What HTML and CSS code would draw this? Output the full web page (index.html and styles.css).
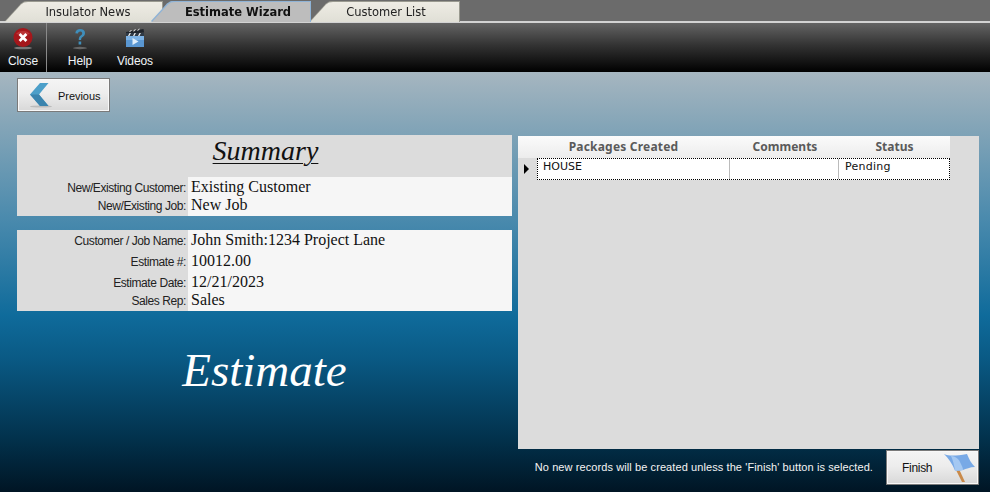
FILE: index.html
```html
<!DOCTYPE html>
<html lang="en">
<head>
<meta charset="utf-8">
<title>Estimate Wizard</title>
<link rel="stylesheet" href="styles.css">
</head>
<body>
<nav class="tabs">
  <div class="tab tab-news"><div class="tab-face">Insulator News</div></div>
  <div class="tab tab-wizard"><div class="tab-face">Estimate Wizard</div></div>
  <div class="tab tab-list"><div class="tab-face">Customer List</div></div>
</nav>
<header class="toolbar">
  <div class="tool tool-close">
    <svg class="tool-icon" width="22" height="22" viewBox="0 0 22 22">
      <ellipse cx="11" cy="20" rx="9" ry="1.3" fill="#777"/>
      <circle cx="11" cy="9.5" r="9.500" fill="#a5171b"/>
      <path d="M4 6a8 6 0 0 1 14 0a12 5 0 0 1-14 0z" fill="#c9484a" opacity=".6"/>
      <path d="M7.6 6.1 11 9.5l3.4-3.4M7.6 12.9 11 9.5l3.4 3.4" fill="none" stroke="#fff" stroke-width="2.8"/>
    </svg>
    <span>Close</span>
  </div>
  <div class="tool-sep"></div>
  <div class="tool tool-help">
    <svg class="tool-icon" width="22" height="22" viewBox="0 0 22 22">
      <ellipse cx="11" cy="20" rx="7" ry="1.2" fill="#666"/>
      <path d="M6.3 5.200C6.600 2.300 8.600 1 11.200 1c2.800 0 4.800 1.500 4.800 4 0 2-1 3-2.400 4-1.100.8-1.500 1.500-1.500 3H9.700c0-2.300.6-3.400 2-4.400 1-.8 1.500-1.400 1.500-2.400 0-1.200-.8-1.800-2-1.800-1.300 0-2 .8-2.200 2.100z" fill="#3f8fbc"/>
      <rect x="9.600" y="13.500" width="2.600" height="3" fill="#3f8fbc"/>
    </svg>
    <span>Help</span>
  </div>
  <div class="tool tool-videos">
    <svg class="tool-icon" width="22" height="22" viewBox="0 0 22 22">
      <rect x="2" y="6" width="18" height="13" fill="#7db3e6"/>
      <rect x="2" y="12" width="18" height="7" fill="#5a97d2"/>
      <path d="M2 4 19.500 1l.6 3.500L2 6z" fill="#20252c"/>
      <path d="M5 4l2-2 1 .1-2 2zM9 3.300l2-2 1 .1-2 2zM13 2.700l2-2 1 .1-2 2z" fill="#eee"/>
      <rect x="2" y="5" width="18" height="3" fill="#2f3a46"/>
      <path d="M4 8l1.500-3h1.400L5.400 8zM9 8l1.500-3h1.400l-1.500 3zM14 8l1.500-3h1.400l-1.500 3z" fill="#eee"/>
      <path d="M8.500 10v7l6-3.500z" fill="#dfeefa"/>
    </svg>
    <span>Videos</span>
  </div>
</header>
<main class="main">
  <button class="btn btn-prev" type="button">
    <svg class="btn-icon" width="24" height="26" viewBox="0 0 24 26">
      <ellipse cx="13" cy="24.500" rx="11" ry="1" fill="#bbb"/>
      <path d="M12 1h8.500L11 12.500 20.500 24H12L2 12.500z" fill="#4c9fc9"/>
      <path d="M2 12.500h9L20.500 24H12z" fill="#3a84ae"/>
    </svg>
    <span>Previous</span>
  </button>
  <div class="content">
    <section class="left">
      <div class="card">
        <h1 class="summary-title"><span>Summary</span></h1>
        <div class="row row-a"><div class="lbl">New/Existing Customer:</div><div class="val">Existing Customer</div></div>
        <div class="row row-b"><div class="lbl">New/Existing Job:</div><div class="val">New Job</div></div>
      </div>
      <div class="card card-2">
        <div class="row row-c"><div class="lbl">Customer / Job Name:</div><div class="val">John Smith:1234 Project Lane</div></div>
        <div class="row row-c"><div class="lbl">Estimate #:</div><div class="val">10012.00</div></div>
        <div class="row row-d"><div class="lbl">Estimate Date:</div><div class="val">12/21/2023</div></div>
        <div class="row row-c"><div class="lbl">Sales Rep:</div><div class="val">Sales</div></div>
      </div>
      <div class="estimate">Estimate</div>
    </section>
    <section class="right">
      <div class="grid">
        <div class="gh gh-corner"></div>
        <div class="gh gh-1">Packages Created</div>
        <div class="gh gh-2">Comments</div>
        <div class="gh gh-3">Status</div>
        <div class="g-sel"><i class="arrow"></i></div>
        <div class="g-row">
          <div class="gc">HOUSE</div>
          <div class="gc gc-mid"></div>
          <div class="gc gc-status">Pending</div>
        </div>
      </div>
    </section>
  </div>
  <footer class="foot">
    <p class="note">No new records will be created unless the 'Finish' button is selected.</p>
    <button class="btn btn-finish" type="button">
      <span>Finish</span>
      <svg class="btn-icon" width="31" height="30" viewBox="0 0 31 30">
        <path d="M11.500 16 18 29h3l-6-13z" fill="#c98a4a"/>
        <path d="M0 1c5 2 11 2 23 0 2 5 4 9 8 13-5 0-9 2-12 3-4 1-6 .5-8 .5C8.500 11 4 5 0 1z" fill="#78a9e6"/>
        <path d="M7 3c4 .5 7 2 9 6s3 6 3 8c-3 .8-6 .8-8 .5C10 12 9 7 7 3z" fill="#a4c8f2"/>
      </svg>
    </button>
  </footer>
</main>
</body>
</html>
```
FILE: styles.css
```css
* { box-sizing: border-box; }
html, body { margin: 0; padding: 0; }
body {
  width: 990px;
  height: 492px;
  overflow: hidden;
  display: flex;
  flex-direction: column;
  font-family: "Liberation Sans", sans-serif;
  background: #000;
}

/* tabs */
.tabs {
  height: 23px;
  flex: none;
  display: flex;
  padding: 2px 0 0 5px;
  background: #6b6b6b;
  border-bottom: 2px solid #d3d3d3;
}
.tab { height: 20px; filter: drop-shadow(0 -1px 0 #9a9a90) drop-shadow(1px 0 0 #9a9a90); }
.tab-face {
  height: 100%;
  display: flex;
  align-items: center;
  justify-content: center;
  font-family: "DejaVu Sans", sans-serif;
  font-size: 11.5px;
  color: #222;
  background: linear-gradient(#eeece4, #e0dfd6);
  clip-path: polygon(0 100%, 16px 12%, 19px 3%, 23px 0, 100% 0, 100% 100%);
}
.tab-news { width: 157px; }
.tab-news .tab-face { padding-left: 9px; }
.tab-wizard {
  width: 158px;
  margin-left: -10px;
  position: relative;
  z-index: 2;
  filter: drop-shadow(0 -1px 0 #8fb3d6) drop-shadow(1px 0 0 #8fb3d6) drop-shadow(-1px 0 0 #8fb3d6);
}
.tab-wizard .tab-face {
  background: #bdbdbd;
  font-weight: 700;
  color: #111;
  padding-left: 14px;
}
.tab-list { width: 149px; }
.tab-list .tab-face { padding-left: 3px; }

/* toolbar */
.toolbar {
  height: 49px;
  flex: none;
  display: flex;
  background: linear-gradient(#646464, #333 45%, #000 100%);
  color: #f0f4f8;
  font-size: 12px;
  letter-spacing: -.1px;
}
.tool {
  display: flex;
  flex-direction: column;
  align-items: center;
  padding-top: 5px;
}
.tool span { margin-top: 4px; line-height: 15px; }
.tool-close { width: 46px; }
.tool-sep { width: 1px; background: #8a8a8a; }
.tool-help { width: 66px; }
.tool-videos { width: 44px; }
.tool-icon { display: block; flex: none; overflow: visible; }

/* main */
.main {
  flex: 1;
  display: flex;
  flex-direction: column;
  padding: 6px 11px 0 17px;
  background: linear-gradient(#a6b6c0 0, #86a6b8 12%, #4a8aad 35%, #0f6b9b 58%, #0a5a85 68%, #02324d 87%, #001524 100%);
}
.btn {
  display: flex;
  align-items: center;
  padding: 0;
  border: 1px solid #7a7a7a;
  box-shadow: inset 0 0 0 1px #f8f8f8;
  background: linear-gradient(#f4f4f4, #ededed 45%, #d8d8d8);
  font-family: "Liberation Sans", sans-serif;
  color: #111;
}
.btn-prev {
  width: 93px;
  height: 34px;
  flex: none;
  font-size: 11px;
  padding: 2px 0 0 10px;
  letter-spacing: -.05px;
}
.btn-prev .btn-icon { margin-top: -2px; }
.btn-prev span { margin-left: 6px; }

.content {
  display: flex;
  gap: 6px;
  margin-top: 23px;
  height: 314px;
  flex: none;
}
.left { width: 495px; flex: none; display: flex; flex-direction: column; }
.card { background: #dcdcdc; }
.card-2 { margin-top: 14px; }
.summary-title {
  margin: 0;
  height: 42px;
  padding-left: 2px;
  text-align: center;
  font: italic 400 28px/32px "Liberation Serif", serif;
  color: #111;
}
.summary-title span { text-decoration: underline; text-decoration-thickness: 1px; text-underline-offset: 3px; }
.row { display: flex; }
.row-a { height: 19px; }
.row-b { height: 20px; }
.row-b .val { line-height: 18px; }
.row-b .lbl { line-height: 20px; }
.row-c { height: 21px; }
.row-d { height: 18px; }
.lbl {
  width: 171px;
  flex: none;
  padding-right: 2px;
  text-align: right;
  font-size: 12px;
  letter-spacing: -.42px;
  line-height: 22px;
  color: #222;
}
.val {
  flex: 1;
  background: #f6f6f6;
  padding-left: 3px;
  font: 16px/20px "Liberation Serif", serif;
  color: #111;
}
.estimate {
  margin-top: 30px;
  text-align: center;
  font: italic 47px/58px "Liberation Serif", serif;
  color: #fff;
}

/* grid */
.right {
  width: 461px;
  flex: none;
  margin-top: 1px;
  background: #dcdcdc;
}
.grid {
  display: grid;
  grid-template-columns: 19px 192px 110px 111px;
  grid-template-rows: 22px 22px;
}
.gh {
  background: linear-gradient(#fbfbfb, #ececec);
  font: 700 12px/22px "Noto Sans", sans-serif;
  color: #5a5a5a;
  text-align: center;
}
.gh-1 { padding-right: 19px; letter-spacing: .2px; }
.gh-2 { padding-left: 2px; }
.g-sel { display: flex; align-items: center; justify-content: center; padding: 0 3px 0 1px; }
.arrow {
  width: 0;
  height: 0;
  border-left: 5px solid #000;
  border-top: 5px solid transparent;
  border-bottom: 5px solid transparent;
}
.g-row {
  grid-column: 2 / 5;
  display: grid;
  grid-template-columns: 191px 110px 110px;
  background: #fff;
  border: 1px dotted #000;
}
.gc {
  font: 11px/16px "DejaVu Sans", sans-serif;
  color: #111;
  padding-left: 5px;
}
.gc-status { letter-spacing: .25px; padding-left: 6px; }
.gc-mid { border-left: 1px solid #bbb; border-right: 1px solid #bbb; }

/* footer */
.foot {
  display: flex;
  justify-content: flex-end;
  align-items: center;
  height: 36px;
  flex: none;
}
.note {
  margin: 0 13px 0 0;
  font-size: 11px;
  letter-spacing: .09px;
  color: #f4f4f4;
}
.btn-finish {
  width: 93px;
  height: 35px;
  justify-content: space-between;
  padding: 2px 3px 0 15px;
  font-size: 12px;
  letter-spacing: -.3px;
}
```
